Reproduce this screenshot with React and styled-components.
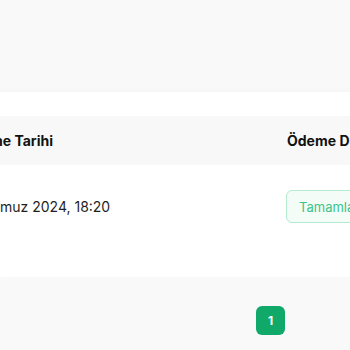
import React from "react";
import styled, { createGlobalStyle } from "styled-components";

const GlobalStyle = createGlobalStyle`
  html, body {
    margin: 0;
    padding: 0;
    background: #f9f9f9;
    font-family: Inter, "Noto Sans", sans-serif;
  }
`;

const Page = styled.div`
  width: 350px;
  height: 350px;
  overflow: hidden;
  padding-top: 92px;
  box-sizing: border-box;
`;

const Card = styled.div`
  background: #ffffff;
  padding: 24px 0 29px;
  box-shadow: 0 -2px 6px rgba(0, 0, 0, 0.02);
  overflow: hidden;
`;

const Table = styled.table`
  width: 525px;
  border-collapse: collapse;
  margin-left: -54px;
  table-layout: fixed;
`;

const HeadRow = styled.tr`
  background: #f8f8f8;
`;

const Th = styled.th`
  height: 49px;
  padding: 0 16px;
  text-align: left;
  font-size: 14px;
  font-weight: 700;
  color: #111111;
  white-space: nowrap;
  overflow: hidden;
`;

const Td = styled.td`
  height: 83px;
  padding: 0 16px 0 ${(p) => p.$pl || 16}px;
  font-size: 14px;
  color: #1f1f1f;
  white-space: nowrap;
  overflow: hidden;
`;

const Badge = styled.span`
  display: inline-flex;
  align-items: center;
  height: 33px;
  padding: 0 12px;
  box-sizing: border-box;
  border: 1px solid #b4ead0;
  border-radius: 6px;
  background: #f3fcf7;
  color: #3cc487;
  font-size: 13px;
`;

const Pager = styled.div`
  display: flex;
  padding: 29px 0 0 256px;
`;

const PageButton = styled.button`
  width: 29px;
  height: 29px;
  border: none;
  border-radius: 6px;
  background: #10a96a;
  color: #ffffff;
  font-family: Inter, sans-serif;
  font-size: 12px;
  font-weight: 700;
  padding: 0;
`;

export default function App() {
  return (
    <>
      <GlobalStyle />
      <Page>
        <Card>
          <Table>
            <colgroup>
              <col style={{ width: 325 }} />
              <col style={{ width: 200 }} />
            </colgroup>
            <thead>
              <HeadRow>
                <Th>Ödeme Tarihi</Th>
                <Th>Ödeme Durumu</Th>
              </HeadRow>
            </thead>
            <tbody>
              <tr>
                <Td>1 Temmuz 2024, 18:20</Td>
                <Td $pl={15}>
                  <Badge>Tamamlandı</Badge>
                </Td>
              </tr>
            </tbody>
          </Table>
        </Card>
        <Pager>
          <PageButton>1</PageButton>
        </Pager>
      </Page>
    </>
  );
}
